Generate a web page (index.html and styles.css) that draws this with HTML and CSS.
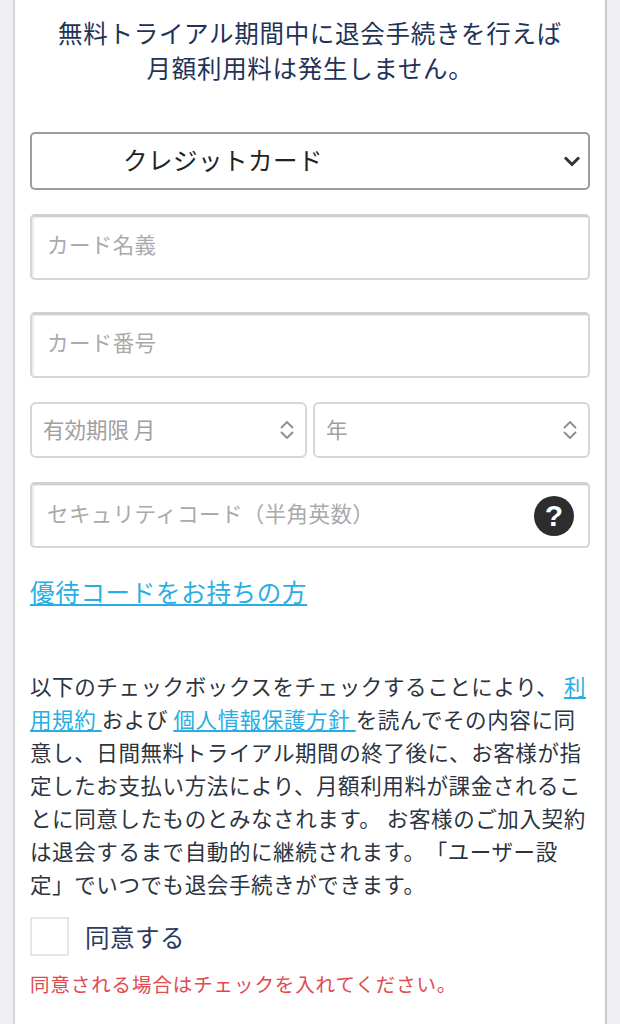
FILE: index.html
```html
<!DOCTYPE html>
<html lang="ja">
<head>
<meta charset="utf-8">
<title>お支払い情報</title>
<link rel="stylesheet" href="styles.css">
</head>
<body>
<main class="card">
  <p class="notice">無料トライアル期間中に退会手続きを行えば<br>月額利用料は発生しません。</p>
  <div class="select-main">
    <span>クレジットカード</span>
    <svg class="chev" width="18" height="12" viewBox="0 0 18 12"><path d="M2 2.5l7 7 7-7" fill="none" stroke="#333" stroke-width="3"/></svg>
  </div>
  <div class="input first">カード名義</div>
  <div class="input second">カード番号</div>
  <div class="date-row">
    <div class="date">
      <span>有効期限 月</span>
      <svg width="16" height="20" viewBox="0 0 16 20"><path d="M2 8l6-6 6 6M2 12l6 6 6-6" fill="none" stroke="#8c8c8c" stroke-width="1.8"/></svg>
    </div>
    <div class="date">
      <span>年</span>
      <svg width="16" height="20" viewBox="0 0 16 20"><path d="M2 8l6-6 6 6M2 12l6 6 6-6" fill="none" stroke="#8c8c8c" stroke-width="1.8"/></svg>
    </div>
  </div>
  <div class="input security">
    <span>セキュリティコード（半角英数）</span>
    <span class="help">?</span>
  </div>
  <a class="promo" href="#">優待コードをお持ちの方</a>
  <p class="terms">以下のチェックボックスをチェックすることにより、 <a href="#">利用規約 </a>および <a href="#">個人情報保護方針 </a>を読んでその内容に同意し、日間無料トライアル期間の終了後に、お客様が指定したお支払い方法により、月額利用料が課金されることに同意したものとみなされます。 お客様のご加入契約は退会するまで自動的に継続されます。「ユーザー設定」でいつでも退会手続きができます。</p>
  <div class="agree">
    <span class="box"></span>
    <span class="agree-label">同意する</span>
  </div>
  <p class="error">同意される場合はチェックを入れてください。</p>
</main>
</body>
</html>
```
FILE: styles.css
```css
html, body {
  margin: 0;
  height: 1024px;
  overflow: hidden;
  background: #f0eff4;
}
body {
  font-family: "Noto Sans CJK JP", "Noto Sans", sans-serif;
  text-spacing-trim: space-all;
}
.card {
  box-sizing: border-box;
  width: 594px;
  height: 1024px;
  margin-left: 13px;
  padding: 0 15px;
  background: #fff;
  border-left: 2px solid #d6d6da;
  border-right: 2px solid #c9c9cd;
  overflow: hidden;
}
.notice {
  margin: 15px 0 0;
  color: #1f3358;
  font-size: 24.5px;
  letter-spacing: 0.7px;
  line-height: 35px;
  text-align: center;
}
.select-main {
  box-sizing: border-box;
  height: 58px;
  margin-top: 47px;
  padding: 0 7px 4px 91px;
  display: flex;
  align-items: center;
  justify-content: space-between;
  border: 2px solid #9c9c9c;
  border-radius: 5px;
  font-size: 24.5px;
  letter-spacing: 0.5px;
  color: #222;
}
.chev { margin-top: 4px; }
.input {
  box-sizing: border-box;
  height: 66px;
  padding: 0 14px 8px 15px;
  display: flex;
  align-items: center;
  justify-content: space-between;
  border: 2px solid #d6d6da;
  border-top: 3px solid #d0d0d4;
  border-radius: 5px;
  box-shadow: inset 2px 1px 0 #ececee;
  font-size: 21.5px;
  letter-spacing: 0.4px;
  color: #aaa;
}
.first { margin-top: 24px; }
.second { margin-top: 32px; }
.date-row {
  display: flex;
  gap: 6px;
  margin-top: 24px;
}
.date {
  box-sizing: border-box;
  flex: 1;
  height: 56px;
  padding: 0 10px 4px 11px;
  display: flex;
  align-items: center;
  justify-content: space-between;
  border: 2px solid #d6d6da;
  border-radius: 6px;
  font-size: 21.5px;
  letter-spacing: 0;
  color: #a0a0a0;
}
.date svg { margin-top: 4px; }
.security { margin-top: 24px; padding-bottom: 6px; }
.help {
  width: 40px;
  height: 40px;
  margin-top: 6px;
  display: flex;
  align-items: center;
  justify-content: center;
  border-radius: 50%;
  background: #2d2d2d;
  color: #fff;
  font-family: "Liberation Sans", sans-serif;
  font-size: 30px;
  font-weight: 700;
  letter-spacing: 0;
}
.promo {
  display: block;
  width: fit-content;
  margin-top: 26px;
  color: #29aee3;
  font-size: 24.5px;
  letter-spacing: 0.7px;
  line-height: 36px;
}
.terms {
  margin: 59px 0 0;
  color: #2b3440;
  font-size: 21.5px;
  letter-spacing: 0.6px;
  line-height: 33px;
}
.terms a { color: #29aee3; }
.agree {
  display: flex;
  align-items: center;
  gap: 16px;
  margin-top: 17px;
}
.box {
  box-sizing: border-box;
  width: 39px;
  height: 39px;
  border: 2px solid #e6e6e6;
}
.agree-label {
  color: #2a3a5c;
  font-size: 24.5px;
  letter-spacing: 0.5px;
}
.error {
  margin: 14px 0 0;
  color: #e04a50;
  font-size: 19.5px;
  letter-spacing: 0.9px;
  line-height: 28px;
}
```
